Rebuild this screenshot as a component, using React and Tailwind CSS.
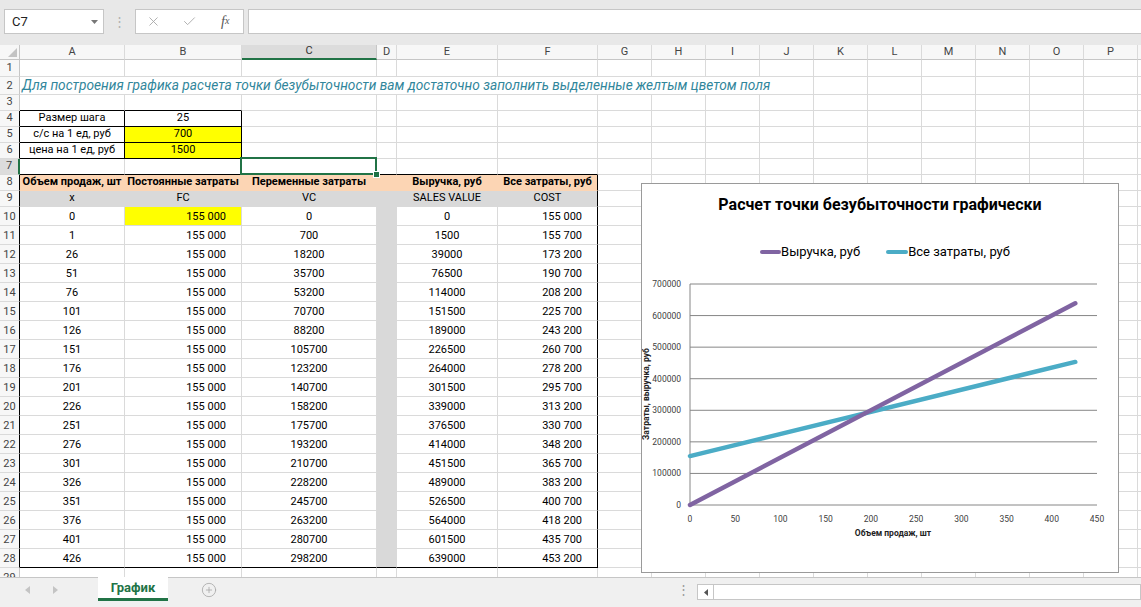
import { X, Check, CirclePlus } from 'lucide-react';

// Excel-like break-even sheet with a floating line chart

const COLS = ['A', 'B', 'C', 'D', 'E', 'F', 'G', 'H', 'I', 'J', 'K', 'L', 'M', 'N', 'O', 'P', ''];
const ROWS = Array.from({ length: 29 }, (_, i) => i + 1);
const UNITS = Array.from({ length: 19 }, (_, i) => (i === 0 ? 0 : 1 + 25 * (i - 1)));

const fmt = (n) => String(n).replace(/\B(?=(\d{3})+(?!\d))/g, '\u00a0');

const SMALL = {
  '4-1': 'Размер шага',
  '4-2': '25',
  '5-1': 'с/с на 1 ед, руб',
  '5-2': '700',
  '6-1': 'цена на 1 ед, руб',
  '6-2': '1500',
};
const HEAD8 = ['Объем продаж, шт', 'Постоянные затраты', 'Переменные затраты', '', 'Выручка, руб', 'Все затраты, руб'];
const HEAD9 = ['x', 'FC', 'VC', '', 'SALES VALUE', 'COST'];

const FILL_BG = { yellow: 'bg-[#ffff00]', salmon: 'bg-[#fcd5b4]', gray: 'bg-[#d9d9d9]' };
const FILL_R = { yellow: 'border-r-[#dadada]', salmon: 'border-r-[#fcd5b4]', gray: 'border-r-[#d9d9d9]' };
const FILL_B = { yellow: 'border-b-[#dadada]', salmon: 'border-b-[#fcd5b4]', gray: 'border-b-[#d9d9d9]' };

function cellContent(r, c) {
  const key = `${r}-${c}`;
  if (SMALL[key]) return { text: SMALL[key], align: 'center' };
  if (r === 8 && c <= 6) return { text: HEAD8[c - 1], align: 'center', bold: true };
  if (r === 9 && c <= 6) return { text: HEAD9[c - 1], align: 'center' };
  if (r >= 10 && r <= 28 && c <= 6) {
    const u = UNITS[r - 10];
    const row = [
      { text: String(u), align: 'center' },
      { text: fmt(155000), align: 'right' },
      { text: String(700 * u), align: 'center' },
      { text: '', align: 'center' },
      { text: String(1500 * u), align: 'center' },
      { text: fmt(155000 + 700 * u), align: 'right' },
    ];
    return row[c - 1];
  }
  return { text: '', align: 'center' };
}

function fillOf(r, c) {
  if ((r === 5 || r === 6 || r === 10) && c === 2) return 'yellow';
  if (r === 8 && c >= 1 && c <= 6) return 'salmon';
  if (r === 9 && c >= 1 && c <= 6) return 'gray';
  if (r >= 10 && r <= 28 && c === 4) return 'gray';
  return null;
}

function Cell({ r, c }) {
  const inSmall = r >= 4 && r <= 6 && (c === 1 || c === 2);
  const rightBlack = inSmall || (r >= 8 && r <= 28 && c === 6);
  const bottomBlack =
    (r === 3 && (c === 1 || c === 2)) || inSmall || (r === 7 && c >= 1 && c <= 6) || (r === 28 && c >= 1 && c <= 6);
  const fill = fillOf(r, c);
  const { text, align, bold } = cellContent(r, c);

  const alignCls = align === 'right' ? 'justify-end pr-[15px]' : 'justify-center';
  const rightCls = rightBlack ? 'border-r-black' : fill ? FILL_R[fill] : 'border-r-[#dadada]';
  const bottomCls = bottomBlack ? 'border-b-black' : fill ? FILL_B[fill] : 'border-b-[#dadada]';
  const selected = r === 7 && c === 3;

  return (
    <div
      className={[
        'flex items-end whitespace-nowrap border-r border-b pb-[1px] text-[11px] leading-[15px] text-black',
        alignCls,
        rightCls,
        bottomCls,
        fill ? FILL_BG[fill] : '',
        bold ? 'font-bold' : '',
        selected ? 'relative' : 'overflow-hidden',
      ].join(' ')}
    >
      {text}
      {selected && (
        <>
          <div className="absolute -left-[2px] -top-[2px] -right-[1px] -bottom-[1px] z-10 border-2 border-[#217346]" />
          <div className="absolute -right-[4px] -bottom-[4px] z-10 h-[7px] w-[7px] border border-white bg-[#217346]" />
        </>
      )}
    </div>
  );
}

function RowHead({ r }) {
  const blackEdge = (r >= 4 && r <= 6) || (r >= 8 && r <= 28);
  const cls =
    r === 7
      ? 'bg-[#dcdcdc] border-r-2 border-r-[#217346]'
      : blackEdge
        ? 'bg-[#f7f7f7] border-r border-r-black'
        : 'bg-[#f7f7f7] border-r border-r-[#c6c6c6]';
  return (
    <div
      className={`flex items-end justify-center border-b border-b-[#dadada] pb-[1px] text-[11px] leading-[15px] text-[#444] ${cls}`}
    >
      {r}
    </div>
  );
}

function Chart() {
  const X0 = 48;
  const XW = 407 / 450;
  const Y0 = 243;
  const YH = 221 / 700000;
  const px = (x) => X0 + x * XW;
  const py = (v) => Y0 - v * YH;
  const yTicks = [0, 100000, 200000, 300000, 400000, 500000, 600000, 700000];
  const xTicks = [0, 50, 100, 150, 200, 250, 300, 350, 400, 450];

  return (
    <div className="absolute left-[641px] top-[138px] z-20 flex h-[390px] w-[478px] flex-col border border-[#9a9a9a] bg-white">
      <div className="flex h-[40px] items-center justify-center pt-[2px] text-[16px] font-bold text-black">
        Расчет точки безубыточности графически
      </div>
      <div className="mt-[18px] flex h-[20px] items-center justify-center gap-[26px] pl-[10px] text-[13px] text-black">
        <div className="flex items-center">
          <span className="h-[4px] w-[21px] rounded-full bg-[#8064a2]" />
          <span>Выручка, руб</span>
        </div>
        <div className="flex items-center">
          <span className="h-[4px] w-[22px] rounded-full bg-[#4bacc6]" />
          <span>Все затраты, руб</span>
        </div>
      </div>
      <svg width="476" height="310" viewBox="0 0 476 310" className="block">
        {yTicks.map((v) => (
          <g key={v}>
            <line x1={X0} x2={px(450)} y1={py(v)} y2={py(v)} stroke="#868686" strokeWidth="1" />
            <text x="39" y={py(v) + 3} textAnchor="end" fontSize="8.5" fill="#404040" fontFamily="Roboto, sans-serif">
              {v}
            </text>
          </g>
        ))}
        <line x1={X0} x2={X0} y1={py(700000)} y2={Y0} stroke="#868686" strokeWidth="1" />
        {xTicks.map((x) => (
          <text key={x} x={px(x)} y="260" textAnchor="middle" fontSize="8.5" fill="#404040" fontFamily="Roboto, sans-serif">
            {x}
          </text>
        ))}
        <text x="251" y="274" textAnchor="middle" fontSize="8.5" fontWeight="bold" fill="#222" fontFamily="Roboto, sans-serif">
          Объем продаж, шт
        </text>
        <text
          x="5"
          y="132"
          transform="rotate(-90 5 132)"
          textAnchor="middle"
          dominantBaseline="middle"
          fontSize="8.5"
          fontWeight="bold"
          fill="#222"
          fontFamily="Roboto, sans-serif"
        >
          Затраты, выручка, руб
        </text>
        <line x1={px(0)} y1={py(155000)} x2={px(426)} y2={py(453200)} stroke="#4bacc6" strokeWidth="4.5" strokeLinecap="round" />
        <line x1={px(0)} y1={py(0)} x2={px(426)} y2={py(639000)} stroke="#8064a2" strokeWidth="4.5" strokeLinecap="round" />
      </svg>
    </div>
  );
}

function Sheet() {
  const cells = [];
  cells.push(
    <div key="corner" className="relative border-r border-b border-r-[#c6c6c6] border-b-[#c6c6c6] bg-[#f7f7f7]">
      <svg width="9" height="9" viewBox="0 0 9 9" className="absolute right-[2px] bottom-[2px]">
        <path d="M9 0 L9 9 L0 9 Z" fill="#c4c4c4" />
      </svg>
    </div>
  );
  COLS.forEach((col, i) => {
    const sel = col === 'C';
    cells.push(
      <div
        key={`c${i}`}
        className={
          sel
            ? 'flex items-center justify-center border-r border-b-2 border-r-[#c6c6c6] border-b-[#217346] bg-[#dcdcdc] text-[11px] text-[#333]'
            : 'flex items-center justify-center border-r border-b border-r-[#dadada] border-b-[#c6c6c6] bg-[#f7f7f7] text-[11px] text-[#444]'
        }
      >
        {col}
      </div>
    );
  });
  ROWS.forEach((r) => {
    cells.push(<RowHead key={`h${r}`} r={r} />);
    for (let c = 1; c <= 17; c++) {
      if (r === 2 && c === 1) {
        cells.push(
          <div
            key="r2"
            className="col-span-10 flex items-center whitespace-nowrap border-b border-r border-b-[#dadada] border-r-[#dadada] pl-[2px] text-[13.7px] italic text-[#31869b]"
          >
            Для построения графика расчета точки безубыточности вам достаточно заполнить выделенные желтым цветом поля
          </div>
        );
        continue;
      }
      if (r === 2 && c <= 10) continue;
      cells.push(<Cell key={`${r}-${c}`} r={r} c={c} />);
    }
  });

  return (
    <div className="relative h-[532px] shrink-0 overflow-hidden">
      <div className="grid w-max grid-cols-[20px_105px_117px_135px_20px_101px_100px_repeat(11,54px)] grid-rows-[15px_17px_18px_repeat(7,16px)_repeat(20,19px)]">
        {cells}
      </div>
      <Chart />
    </div>
  );
}

function FormulaBar() {
  return (
    <div className="flex h-[45px] shrink-0 items-start bg-[#e8e8e8] pt-[9px]">
      <div className="ml-[4px] flex h-[25px] w-[100px] items-center justify-between border border-[#c6c6c6] bg-white pl-[7px] pr-[5px] text-[13px] text-[#222]">
        <span>C7</span>
        <svg width="7" height="4" viewBox="0 0 7 4">
          <path d="M0 0 L7 0 L3.5 4 Z" fill="#777" />
        </svg>
      </div>
      <div className="flex h-[25px] w-[31px] items-center justify-center text-[13px] leading-none text-[#b0b0b0]">⋮</div>
      <div className="flex h-[25px] w-[109px] items-center border border-[#c6c6c6] bg-white">
        <div className="flex w-[36px] justify-center">
          <X size={15} strokeWidth={1.4} color="#a6a6a6" />
        </div>
        <div className="flex w-[36px] justify-center">
          <Check size={15} strokeWidth={1.4} color="#a6a6a6" />
        </div>
        <div className="flex w-[36px] justify-center font-['Liberation_Serif',serif] text-[14px] italic text-[#555]">
          f<span className="translate-y-[2px] text-[10px]">x</span>
        </div>
      </div>
      <div className="-mr-[2px] ml-[4px] h-[25px] flex-1 border border-[#c6c6c6] bg-white" />
    </div>
  );
}

function TabBar() {
  return (
    <div className="flex h-[30px] shrink-0 flex-col bg-[#f0f0f0]">
      <div className="flex h-[24px] items-stretch border-t border-[#c6c6c6]">
        <div className="flex w-[98px] items-center">
          <svg width="5" height="8" viewBox="0 0 5 8" className="ml-[25px]">
            <path d="M5 0 L5 8 L0 4 Z" fill="#c4c4c4" />
          </svg>
          <svg width="5" height="8" viewBox="0 0 5 8" className="ml-[23px]">
            <path d="M0 0 L0 8 L5 4 Z" fill="#c4c4c4" />
          </svg>
        </div>
        <div className="-mt-[1px] flex w-[70px] items-center justify-center border-b-[3px] border-[#217346] bg-white text-[13px] font-bold text-[#217346]">
          График
        </div>
        <div className="ml-[33px] flex items-center">
          <CirclePlus size={16} strokeWidth={1.2} color="#a6a6a6" />
        </div>
        <div className="flex-1" />
        <div className="flex w-[14px] items-center justify-center text-[13px] text-[#9a9a9a]">⋮</div>
        <div className="ml-[7px] mt-[6px] flex h-[16px] w-[444px] border border-[#c6c6c6] bg-white">
          <div className="flex w-[16px] items-center justify-center border-r border-[#c6c6c6]">
            <svg width="4" height="7" viewBox="0 0 4 7">
              <path d="M4 0 L4 7 L0 3.5 Z" fill="#555" />
            </svg>
          </div>
        </div>
      </div>
    </div>
  );
}

export default function App() {
  return (
    <div className="flex h-[607px] w-[1141px] flex-col overflow-hidden bg-white font-['Roboto',sans-serif] text-[#222]">
      <FormulaBar />
      <Sheet />
      <TabBar />
    </div>
  );
}
